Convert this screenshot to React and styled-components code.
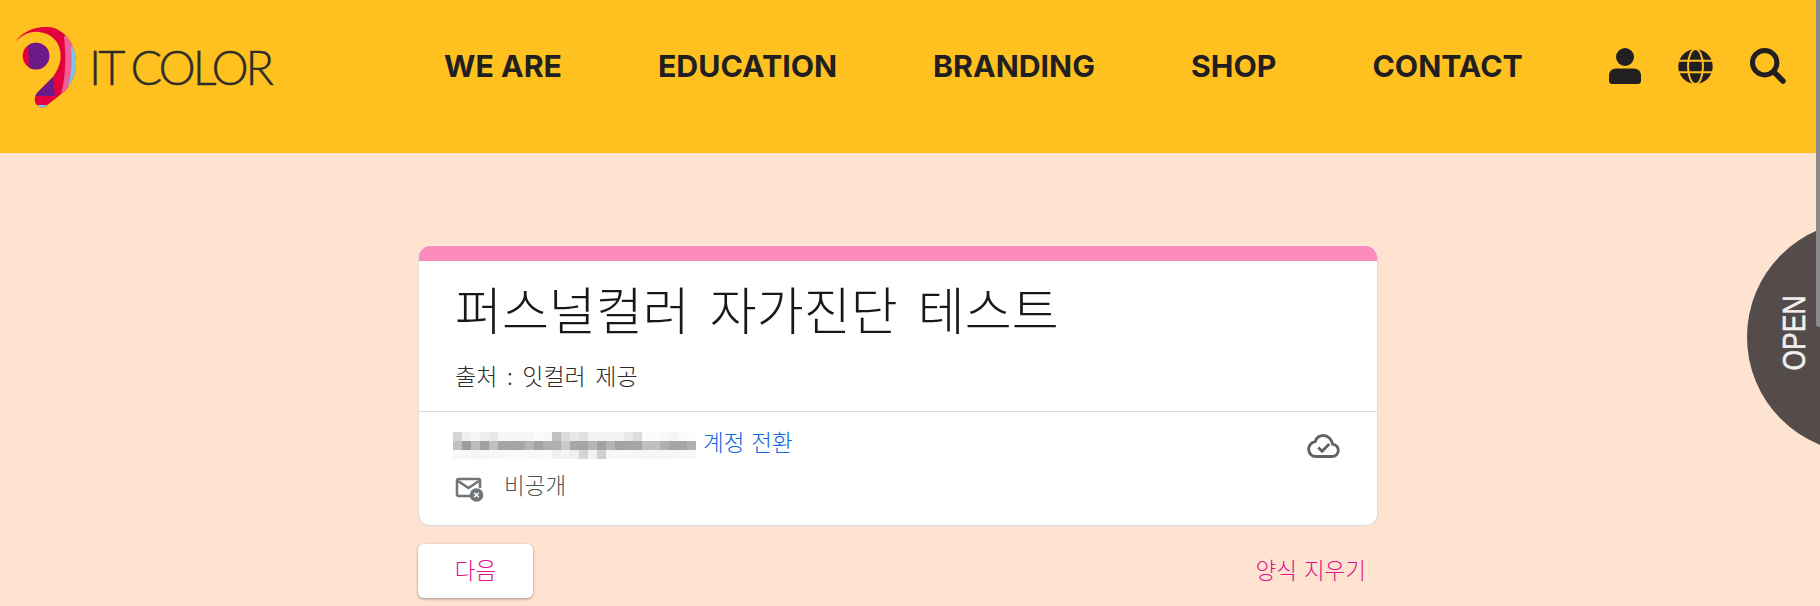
import React from "react";
import styled, { createGlobalStyle } from "styled-components";

const Global = createGlobalStyle`
  html, body { margin: 0; padding: 0; height: 606px; overflow: hidden; background: #fee3d1; }
  * { box-sizing: border-box; }
`;
const Page = styled.div`
  position: relative; width: 1820px; height: 606px; overflow: hidden;
  background: #fee3d1; font-family: "Noto Sans CJK KR", sans-serif;
`;
const Header = styled.header`
  height: 153px; background: #ffc120; display: flex; align-items: flex-start;
`;
const Logo = styled.div`
  width: 444px; display: flex; align-items: flex-start; padding: 26px 0 0 15px;
`;
const Wordmark = styled.span`
  font-family: "Lato", sans-serif; font-weight: 300; font-size: 47px; line-height: 48px;
  color: #2e2c2a; margin: 17px 0 0 12px; white-space: nowrap; letter-spacing: -3.1px;
  -webkit-text-stroke: 0.4px #2e2c2a;
`;
const Nav = styled.nav`
  display: flex; gap: 96px; height: 132px; align-items: center;
  font-family: "Inter", sans-serif; font-weight: 700; font-size: 30.3px; color: #221f20;
`;
const Icons = styled.div`
  display: flex; align-items: center; height: 132px; margin-left: 86px; gap: 37px; color: #221f20;
`;
const IconBox = styled.svg`display: block;`;
const Main = styled.main`
  width: 960px; margin: 93px 0 0 418px;
`;
const Card = styled.section`
  background: #fff; border-radius: 12px; border: 1px solid #dadce0; border-top: none;
  height: 280px; overflow: hidden;
`;
const Bar = styled.div`height: 15px; background: #fb8abd; margin: 0 -1px;`;
const TitleArea = styled.div`height: 151px; padding: 12px 0 0 36px; border-bottom: 1px solid #dadce0;`;
const Title = styled.h1`
  margin: 0; font-weight: 300; font-size: 51px; line-height: 70px; color: #17181a; word-spacing: 9px; white-space: nowrap;
`;
const Source = styled.p`
  margin: 16px 0 0; font-weight: 300; font-size: 23px; line-height: 32px; color: #2c2c2c; word-spacing: 4.5px;
`;
const AccountArea = styled.div`
  display: flex; justify-content: space-between; padding: 20px 37px 0 34px;
`;
const AccountRow = styled.div`display: flex; align-items: flex-start; height: 28px;`;
const Mosaic = styled.svg`display: block; margin-right: 7px;`;
const Switch = styled.a`color: #0b66e4; font-size: 22.500px; line-height: 28px; word-spacing: 2px; font-weight: 300; margin-top: -5px;`;
const PrivateRow = styled.div`display: flex; align-items: center; margin-top: 13px; margin-left: 2px; color: #4f5357; font-size: 22.500px; font-weight: 300;`;
const PrivateLabel = styled.span`margin-left: 20px; position: relative; top: -5px;`;
const CloudSlot = styled.div`padding-top: 2px;`;
const Actions = styled.div`display: flex; justify-content: space-between; align-items: center; margin-top: 18px;`;
const NextButton = styled.button`
  width: 115px; height: 54px; border: none; border-radius: 6px; background: #fff; color: #e0148a;
  font: inherit; font-size: 22.500px; font-weight: 300; padding: 0 0 4px; box-shadow: 0 1px 3px rgba(60,40,30,.45);
`;
const ClearButton = styled.button`
  background: none; border: none; padding: 0 12px 4px 0; color: #e0148a; font: inherit; font-size: 22.500px; font-weight: 300; word-spacing: 2px;
`;
const OpenTab = styled.div`
  position: absolute; left: 1747px; top: 221px; width: 232px; height: 232px; border-radius: 50%;
  background: #544b4b;
`;
const OpenText = styled.span`
  position: absolute; left: 1795px; top: 333px; transform: translate(-50%, -50%) rotate(-90deg) scaleY(1.2);
  font-family: "Liberation Sans", sans-serif; font-size: 26.500px; color: #f0eeee; line-height: 1; -webkit-text-stroke: 0.5px #f0eeee;
`;
const Scrollbar = styled.div`
  position: absolute; right: 0; top: 0; width: 4px; height: 327px; background: #8a8a8a; border-radius: 0 0 0 3px;
`;

const row1 = "d4 f1 f6 ef e7 f7 f6 f6 f6 fb f8 c0 dc e8 e1 f3 f3 f3 f3 ea dc fc fb f8 f5 fb fe";
const row2 = "c0 9c bc a0 bf a5 a5 a5 b5 a3 b0 b0 ca a6 a6 b6 a2 b5 a2 a5 a5 bf c0 b0 a5 a5 b0";
const row3 = "f8 f8 f6 f6 f8 f8 fa fa f8 f8 fa f0 f4 ee d4 f2 cf f6 f8 f8 f6 f6 f6 f6 f6 f8 f8";
const rows = [row1, row2, row3].map((r) => r.split(" "));

const SILHOUETTE = "M15 42C22 32 35 26 48 27C64 28 76 44 76 63C76 74 72 83 65 91L46 106C43 109 40 108 37 105C34 102 34 97 37 93L53 77C59 68 62 60 60 50C58 40 50 33 39 32C30 31 22 35 15 42Z";

const LogoMark = () => (
  <svg width="62" height="84" viewBox="15 26 62 84">
    <defs>
      <clipPath id="logoShape"><path d={SILHOUETTE} /></clipPath>
      <clipPath id="logoDot"><circle cx="36" cy="56" r="13.300" /></clipPath>
    </defs>
    <g clipPath="url(#logoShape)">
      <rect x="10" y="20" width="70" height="95" fill="#e4003f" />
      <path d="M64 36C66 58 66 76 61 94L70 94L80 60L70 36Z" fill="#ee6198" />
      <path d="M71 47C72 60 72 74 68 87L80 87L80 47Z" fill="#7cc8e4" />
      <path d="M33 96L53 76L55 96Z" fill="#6c1a87" />
      <path d="M37 105L47 105L42 110Z" fill="#7cc8e4" />
    </g>
    <g clipPath="url(#logoDot)">
      <rect x="20" y="40" width="32" height="32" fill="#e4003f" />
      <path d="M28 40L29 72L52 72L52 40Z" fill="#6c1a87" />
    </g>
  </svg>
);

const UserIcon = () => (
  <IconBox width="32" height="36" viewBox="0 0 32 36" fill="currentColor">
    <circle cx="16" cy="9" r="9" />
    <path d="M7 20.500h18c4 0 7 3 7 7v5.500c0 1.500-1 3-3 3H3c-2 0-3-1.500-3-3v-5.500c0-4 3-7 7-7z" />
  </IconBox>
);
const GlobeIcon = () => (
  <IconBox width="35" height="35" viewBox="0 0 35 35">
    <circle cx="17.500" cy="17.500" r="17.200" fill="currentColor" />
    <g fill="none" stroke="#ffc120" strokeWidth="2">
      <ellipse cx="17.500" cy="17.500" rx="7.500" ry="17.500" />
      <path d="M0 11.800h35M0 23.200h35" />
    </g>
  </IconBox>
);
const SearchIcon = () => (
  <IconBox width="36" height="36" viewBox="0 0 36 36" fill="none" stroke="currentColor">
    <circle cx="14.700" cy="14.700" r="12.200" strokeWidth="5" />
    <path d="M24 24l9 9" strokeWidth="5.500" strokeLinecap="round" />
  </IconBox>
);
const MailOff = () => (
  <svg width="29" height="25" viewBox="0 0 29 25">
    <path d="M18 19H3.500C2.700 19 2 18.300 2 17.500V3.500C2 2.700 2.700 2 3.500 2h20c.8 0 1.500.7 1.500 1.500V11" fill="none" stroke="#70757a" strokeWidth="2.600" />
    <path d="M3 4l10.500 7L24 4" fill="none" stroke="#70757a" strokeWidth="2.600" />
    <circle cx="21.500" cy="18" r="6.800" fill="#70757a" />
    <path d="M19.200 15.700l4.600 4.600M23.800 15.700l-4.600 4.600" stroke="#fff" strokeWidth="1.500" />
  </svg>
);
const CloudCheck = () => (
  <svg width="33" height="24" viewBox="0 0 34 25" fill="none" stroke="#5f6368" strokeWidth="3">
    <path d="M9 23.500h17c3.500 0 6.500-3 6.500-6.500s-3-6.300-6-6.500C25.500 5.500 21.500 1.500 17 1.500c-4 0-7.500 2.500-8.800 6.500C4.500 8.500 1.500 12 1.500 16c0 4 3.300 7.500 7.500 7.500z" />
    <path d="M11.500 14l4 4 7.500-7.500" strokeWidth="3" />
  </svg>
);

export default function App() {
  return (
    <Page>
      <Global />
      <Header>
        <Logo>
          <LogoMark />
          <Wordmark>IT COLOR</Wordmark>
        </Logo>
        <Nav>
          <span>WE ARE</span>
          <span>EDUCATION</span>
          <span>BRANDING</span>
          <span>SHOP</span>
          <span>CONTACT</span>
        </Nav>
        <Icons>
          <UserIcon />
          <GlobeIcon />
          <SearchIcon />
        </Icons>
      </Header>
      <Main>
        <Card>
          <Bar />
          <TitleArea>
            <Title>퍼스널컬러 자가진단 테스트</Title>
            <Source>출처 : 잇컬러 제공</Source>
          </TitleArea>
          <AccountArea>
            <div>
              <AccountRow>
                <Mosaic width="243" height="27" viewBox="0 0 27 3" shapeRendering="crispEdges">
                  {rows.map((r, y) => r.map((c, x) => <rect key={`${x}-${y}`} x={x} y={y} width="1" height="1" fill={`#${c}${c}${c}`} />))}
                </Mosaic>
                <Switch>계정 전환</Switch>
              </AccountRow>
              <PrivateRow>
                <MailOff />
                <PrivateLabel>비공개</PrivateLabel>
              </PrivateRow>
            </div>
            <CloudSlot><CloudCheck /></CloudSlot>
          </AccountArea>
        </Card>
        <Actions>
          <NextButton>다음</NextButton>
          <ClearButton>양식 지우기</ClearButton>
        </Actions>
      </Main>
      <OpenTab />
      <OpenText>OPEN</OpenText>
      <Scrollbar />
    </Page>
  );
}
